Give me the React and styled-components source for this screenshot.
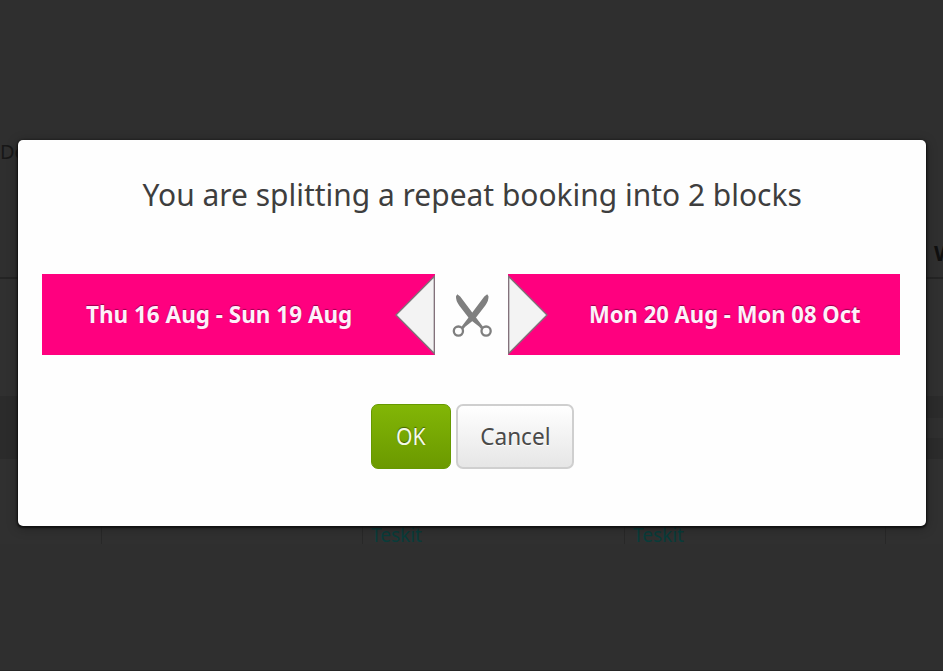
import React from "react";
import styled, { createGlobalStyle } from "styled-components";

const GlobalStyle = createGlobalStyle`
  *, *::before, *::after { box-sizing: border-box; }
  html, body { margin: 0; padding: 0; }
  body {
    background: #2f2f2f;
    font-family: "Noto Sans", "Open Sans", sans-serif;
    overflow: hidden;
  }
`;

const Screen = styled.div`
  position: relative;
  width: 943px;
  height: 671px;
  overflow: hidden;
  background: #2f2f2f;
  border-bottom: 1px solid #252525;
`;

const Schedule = styled.div`
  display: flex;
  flex-direction: column;
  height: 544px;
  padding-top: 140px;
`;

const ScheduleTitle = styled.div`
  height: 94px;
  font-size: 20px;
  line-height: 24px;
  color: #171717;
`;

const DayHeader = styled.div`
  display: flex;
  height: 45px;
  padding-left: 934px;
  border-bottom: 2px solid #242424;
  font-size: 22px;
  font-weight: 700;
  line-height: 37px;
  color: #101010;
`;

const EmptyRow = styled.div`
  height: 117px;
  background: #303030;
`;

const ShadedRow = styled.div`
  display: flex;
  flex-direction: column;
  align-items: flex-end;
  justify-content: center;
  height: 63px;
  background: #2b2b2b;
`;

const OpenSlot = styled.div`
  width: 20px;
  height: 20px;
  background: #2f2f2f;
`;

const BookingRow = styled.div`
  display: grid;
  grid-template-columns: 102px 261px 262px 261px 1fr;
  flex: 1;
  background: #303030;
`;

const BookingCell = styled.div`
  display: flex;
  align-items: flex-end;
  padding-left: 8px;
  border-right: 1px solid #282828;
  font-size: 20px;
  line-height: 18px;
  color: #093c3a;
`;

const Overlay = styled.div`
  position: absolute;
  inset: 0;
  padding: 140px 17px 0 18px;
`;

const Dialog = styled.section`
  display: flex;
  flex-direction: column;
  align-items: center;
  height: 386px;
  padding: 32px 24px 0;
  border-radius: 5px;
  background: #fefefe;
  box-shadow: 0 1px 2px 1px #101010, 0 2px 12px rgba(0, 0, 0, 0.3);
`;

const Fitted = styled.span`
  display: inline-block;
  flex: none;
  white-space: nowrap;
  transform: scaleX(${(p) => p.$x || 1});
  transform-origin: ${(p) => p.$origin || "center"};
`;

const Title = styled.h1`
  display: flex;
  justify-content: center;
  width: 100%;
  height: 44px;
  margin: 0 0 58px;
  font-size: 31px;
  font-weight: 400;
  line-height: 44px;
  color: #3e3e3e;
`;

const Blocks = styled.div`
  display: grid;
  grid-template-columns: 393px 73px 392px;
  justify-content: start;
  width: 100%;
  height: 81px;
`;

const Ribbon = styled.div`
  display: flex;
  align-items: center;
  background: #ff007f;
`;

const RibbonLabel = styled.div`
  display: flex;
  flex: 1;
  justify-content: center;
  min-width: 0;
  padding: 0 0 2px 1px;
  font-size: 24px;
  font-weight: 700;
  line-height: 32px;
  color: #fff0fa;
  text-shadow: 0 -1px 1px rgba(70, 0, 40, 0.55);
`;

const ScissorsSlot = styled.div`
  display: flex;
  align-items: center;
  justify-content: center;
`;

const Actions = styled.div`
  display: flex;
  gap: 5px;
  margin: 49px 0 0 1px;
`;

const Button = styled.button`
  display: flex;
  align-items: center;
  justify-content: center;
  width: ${(p) => (p.$primary ? 80 : 118)}px;
  height: 65px;
  padding: 0 0 2px;
  border: ${(p) => (p.$primary ? "1px solid #669900" : "2px solid #cfcfcf")};
  border-radius: 7px;
  background: ${(p) =>
    p.$primary
      ? "linear-gradient(#82b606, #6b9900)"
      : "linear-gradient(#ffffff, #e6e6e6)"};
  color: ${(p) => (p.$primary ? "#f4fae6" : "#4a4a4a")};
  font-family: inherit;
  font-size: 24px;
  line-height: 32px;
  text-shadow: ${(p) =>
    p.$primary ? "0 -1px 1px rgba(30, 50, 0, 0.6)" : "0 1px 0 #ffffff"};
`;

function Notch({ right }) {
  return (
    <svg width="40" height="80" viewBox="0 0 40 80" aria-hidden="true">
      <path
        d={right ? "M.7 1.5V78.5L39 40Z" : "M39.3 1.5V78.5L1 40Z"}
        fill="#f3f3f3"
        stroke="#7d7479"
        strokeWidth="1.3"
      />
    </svg>
  );
}

function Scissors() {
  return (
    <svg width="42" height="46" viewBox="0 0 42 46" aria-hidden="true">
      <g fill="#7f7f7f">
        <path d="M6.3 2.2L9.2 4.6L24 24.2L32.4 35.2L30.2 37L28 34.4L18.8 27.2L8.2 13.6Q4.6 8.3 5 4.3Z" />
        <path d="M36.2 2.2L33.3 4.6L18.5 24.2L10.1 35.2L12.3 37L14.5 34.4L23.7 27.2L34.3 13.6Q37.9 8.3 37.5 4.3Z" />
      </g>
      <circle cx="7.4" cy="39.1" r="4.6" fill="#fefefe" stroke="#7f7f7f" strokeWidth="2.3" />
      <circle cx="35.1" cy="39.1" r="4.6" fill="#fefefe" stroke="#7f7f7f" strokeWidth="2.3" />
    </svg>
  );
}

export default function App() {
  return (
    <Screen>
      <GlobalStyle />
      <Schedule>
        <ScheduleTitle>De</ScheduleTitle>
        <DayHeader>W</DayHeader>
        <EmptyRow />
        <ShadedRow>
          <OpenSlot />
        </ShadedRow>
        <BookingRow>
          <BookingCell />
          <BookingCell />
          <BookingCell>
            <Fitted $x={0.95} $origin="left">Teskit</Fitted>
          </BookingCell>
          <BookingCell>
            <Fitted $x={0.95} $origin="left">Teskit</Fitted>
          </BookingCell>
        </BookingRow>
      </Schedule>
      <Overlay>
        <Dialog role="dialog" aria-modal="true">
          <Title>
            <Fitted $x={0.966}>You are splitting a repeat booking into 2 blocks</Fitted>
          </Title>
          <Blocks>
            <Ribbon>
              <RibbonLabel>
                <Fitted $x={0.937}>Thu 16 Aug - Sun 19 Aug</Fitted>
              </RibbonLabel>
              <Notch />
            </Ribbon>
            <ScissorsSlot>
              <Scissors />
            </ScissorsSlot>
            <Ribbon>
              <Notch right />
              <RibbonLabel>
                <Fitted $x={0.919}>Mon 20 Aug - Mon 08 Oct</Fitted>
              </RibbonLabel>
            </Ribbon>
          </Blocks>
          <Actions>
            <Button $primary>
              <Fitted $x={0.88}>OK</Fitted>
            </Button>
            <Button>
              <Fitted $x={0.94}>Cancel</Fitted>
            </Button>
          </Actions>
        </Dialog>
      </Overlay>
    </Screen>
  );
}
